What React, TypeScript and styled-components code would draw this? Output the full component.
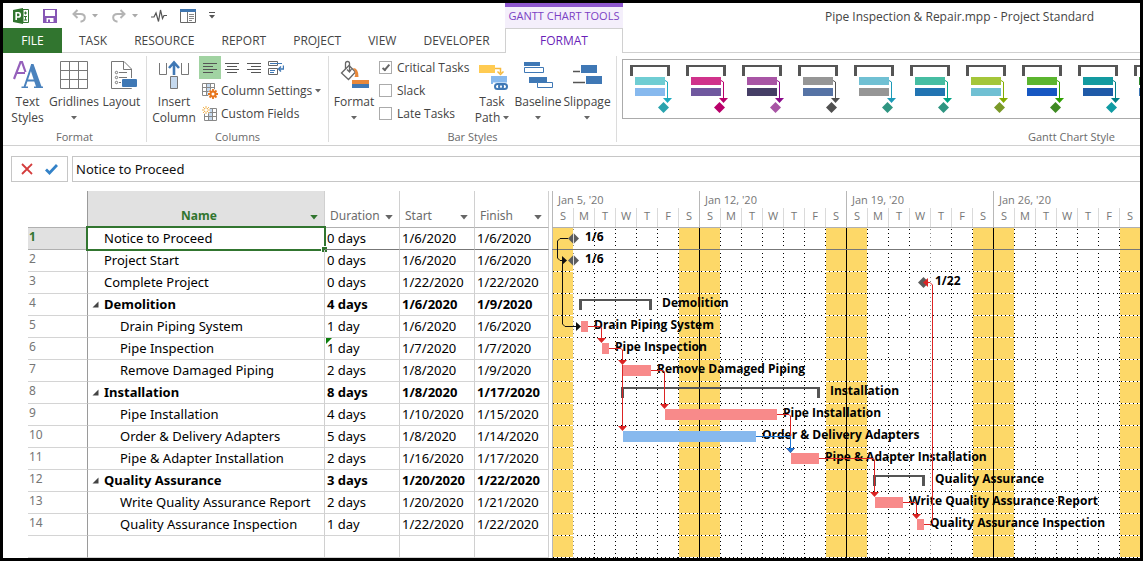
import React, { useEffect, useRef, useState } from "react";
import styled, { createGlobalStyle } from "styled-components";

const GREEN = "#31752f";
const PURPLE = "#7b3fc4";
const DAY = 21;
const WEEK = DAY * 7;
const ROW = 22;

const GlobalStyle = createGlobalStyle`
  *, *::before, *::after { box-sizing: border-box; }
  body { margin: 0; background: #000; }
  button, input { font: inherit; color: inherit; margin: 0; padding: 0; }
  button { background: none; border: 0; }
  svg { display: block; flex: none; }
`;

const Frame = styled.div`
  min-height: 100vh;
  border: 3px solid #000;
  background: #fff;
  color: #444;
  font-family: "Open Sans", "Noto Sans", sans-serif;
  font-size: 12px;
  line-height: 16px;
  overflow: hidden;
`;

/* ---------- title bar and tabs ---------- */
const Top = styled.header`
  display: flex;
`;
const TopLeft = styled.div`
  flex: none;
  width: 502px;
`;
const QuickBar = styled.div`
  display: flex;
  align-items: center;
  height: 25px;
  padding-left: 10px;
`;
const QuickButton = styled.button<{ $gap?: number }>`
  display: flex;
  align-items: center;
  margin-right: ${(p) => p.$gap ?? 0}px;
`;
const Tabs = styled.nav`
  display: flex;
  height: 25px;
  border-bottom: 1px solid #d0d0d0;
`;
const FileTab = styled.button`
  width: 59px;
  height: 25px;
  margin-right: 4px;
  background: ${GREEN};
  color: #fff;
`;
const Tab = styled.button`
  padding: 2px 14px 0 13px;
  white-space: nowrap;
`;
const Context = styled.div`
  flex: none;
  width: 118px;
`;
const ContextTitle = styled.div`
  height: 25px;
  border-top: 4px solid #8e57cf;
  background: #f4effb;
  color: ${PURPLE};
  font-size: 11px;
  line-height: 18px;
  text-align: center;
  white-space: nowrap;
`;
const ContextTab = styled.button`
  display: block;
  width: 100%;
  height: 25px;
  border: solid #d0d0d0;
  border-width: 1px 1px 0;
  color: #6a1fb8;
`;
const TopRight = styled.div`
  flex: 1;
  min-width: 0;
  border-bottom: 1px solid #d0d0d0;
`;
const DocTitle = styled.h1`
  margin: 0;
  padding: 6px 46px 0 0;
  font-size: 12px;
  font-weight: 400;
  line-height: 16px;
  text-align: right;
  white-space: nowrap;
`;

/* ---------- ribbon ---------- */
const Ribbon = styled.section`
  display: flex;
  height: 93px;
  padding-top: 3px;
  border-bottom: 1px solid #d0d0d0;
`;
const Group = styled.div<{ $width?: number }>`
  display: flex;
  flex-direction: column;
  flex: ${(p) => (p.$width ? "none" : "1")};
  width: ${(p) => (p.$width ? `${p.$width}px` : "auto")};
  min-width: 0;
  height: 86px;
  border-right: ${(p) => (p.$width ? "1px solid #dcdcdc" : "0")};
`;
const GroupBody = styled.div<{ $pad?: number }>`
  display: flex;
  flex: 1;
  padding-left: ${(p) => p.$pad ?? 0}px;
`;
const GroupLabel = styled.div<{ $end?: boolean }>`
  height: 16px;
  margin-bottom: -3px;
  padding-right: ${(p) => (p.$end ? 25 : 0)}px;
  color: #6a6a6a;
  font-size: 11px;
  text-align: ${(p) => (p.$end ? "right" : "center")};
`;
const Big = styled.button<{ $width: number }>`
  display: flex;
  flex: none;
  flex-direction: column;
  align-items: center;
  width: ${(p) => p.$width}px;
  padding-top: 4px;
  white-space: nowrap;
  > svg:first-child { margin-bottom: 4px; }
`;
const BigText = styled.span`
  display: flex;
  align-items: center;
  justify-content: center;
  gap: 3px;
  height: 16px;
`;
const Stack = styled.div<{ $width?: number }>`
  display: flex;
  flex: none;
  flex-direction: column;
  width: ${(p) => (p.$width ? `${p.$width}px` : "auto")};
`;
const AlignRow = styled.div`
  display: flex;
  height: 23px;
`;
const AlignButton = styled.button<{ $on?: boolean }>`
  display: grid;
  place-items: center;
  width: 22px;
  height: 23px;
  background: ${(p) => (p.$on ? "#a1d3a2" : "transparent")};
`;
const Small = styled.button`
  display: flex;
  align-items: center;
  gap: 3px;
  height: 23px;
  padding-left: 3px;
  white-space: nowrap;
`;
const Check = styled.label`
  display: flex;
  align-items: center;
  gap: 5px;
  height: 23px;
  white-space: nowrap;
`;
const Box = styled.input`
  appearance: none;
  display: grid;
  place-items: center;
  flex: none;
  width: 13px;
  height: 13px;
  border: 1px solid #ababab;
  background: #fff;
  &:checked::after {
    content: "";
    width: 4px;
    height: 8px;
    margin-top: -2px;
    border: solid #666;
    border-width: 0 2px 2px 0;
    transform: rotate(40deg);
  }
`;
const Gallery = styled.div`
  display: flex;
  flex: 1;
  min-width: 0;
  height: 60px;
  margin: 3px 0 0 5px;
  border: 1px solid #ababab;
  border-right: 0;
  overflow: hidden;
`;

/* ---------- entry bar ---------- */
const EntryBar = styled.div`
  display: flex;
  gap: 4px;
  margin: 10px 0 9px;
  padding-left: 8px;
`;
const EntryButtons = styled.div`
  display: flex;
  align-items: center;
  justify-content: center;
  gap: 12px;
  width: 57px;
  height: 26px;
  border: 1px solid #c6c6c6;
`;
const EntryInput = styled.input`
  flex: 1;
  min-width: 0;
  height: 26px;
  padding-left: 3px;
  border: 1px solid #c6c6c6;
  border-right: 0;
  color: #111;
  font-family: "Noto Sans", "Open Sans", sans-serif;
  font-size: 13px;
`;

/* ---------- sheet ---------- */
const Split = styled.main`
  display: flex;
`;
const SheetPane = styled.div`
  flex: none;
  width: 546px;
  padding-left: 25px;
`;
const Sheet = styled.table`
  table-layout: fixed;
  width: 521px;
  border-collapse: separate;
  border-spacing: 0;
  color: #000;
  font-family: "Noto Sans", "Open Sans", sans-serif;
  font-size: 13px;
  line-height: 18px;
`;
const Head = styled.th<{ $on?: boolean; $blank?: boolean }>`
  height: 37px;
  padding: 13px 6px 0 ${(p) => (p.$on ? 0 : 5)}px;
  border-right: 1px solid ${(p) => (p.$blank ? "#9a9a9a" : "#d0d0d0")};
  border-bottom: 1px solid #b0b0b0;
  background: ${(p) => (p.$on ? "#e1e1e1" : "#fff")};
  color: ${(p) => (p.$on ? GREEN : "#6c6c6c")};
  font-size: 12px;
  font-weight: ${(p) => (p.$on ? 700 : 400)};
`;
const HeadInner = styled.div<{ $center?: boolean }>`
  display: flex;
  align-items: center;
  justify-content: space-between;
  > span { flex: 1; text-align: ${(p) => (p.$center ? "center" : "left")}; }
  > button { padding-top: 3px; }
`;
const RowNumber = styled.th<{ $on?: boolean }>`
  height: 22px;
  padding: 0 0 3px 1px;
  border-right: 1px solid #9a9a9a;
  border-bottom: 1px solid ${(p) => (p.$on ? "#b0b0b0" : "#d4d4d4")};
  background: ${(p) => (p.$on ? "#e1e1e1" : "#fff")};
  color: ${(p) => (p.$on ? GREEN : "#767676")};
  font-size: 12px;
  font-weight: ${(p) => (p.$on ? 700 : 400)};
  line-height: 18px;
  text-align: left;
`;
const Cell = styled.td<{ $bold?: boolean; $line?: boolean }>`
  position: relative;
  height: 22px;
  padding: 0 0 1px 2px;
  border-right: 1px solid #d0d0d0;
  border-bottom: 1px solid ${(p) => (p.$line ? "#777" : "#d4d4d4")};
  font-weight: ${(p) => (p.$bold ? 700 : 400)};
  white-space: nowrap;
`;
const NameCell = styled(Cell)<{ $level: number }>`
  padding-left: ${(p) => p.$level * 16}px;
`;
const Selection = styled.div`
  position: absolute;
  inset: -2px;
  border: 2px solid ${GREEN};
  pointer-events: none;
  &::after {
    content: "";
    position: absolute;
    right: -3px;
    bottom: -3px;
    width: 6px;
    height: 6px;
    border: solid #fff;
    border-width: 1px 0 0 1px;
    background: ${GREEN};
  }
`;
const Toggle = styled.button`
  position: absolute;
  left: 4px;
  top: 7px;
`;
const Flag = styled.span`
  position: absolute;
  left: 1px;
  top: 0;
  border: 3px solid transparent;
  border-top-color: #0b7d0b;
  border-left-color: #0b7d0b;
`;

/* ---------- chart ---------- */
const ChartPane = styled.div`
  flex: 1;
  min-width: 0;
  margin-left: 3px;
  overflow: hidden;
`;
const Timescale = styled.div`
  display: flex;
  height: 37px;
  border-bottom: 1px solid #b0b0b0;
  color: #767676;
`;
const Week = styled.div`
  flex: none;
  width: ${WEEK}px;
  border-left: 1px solid #b8b8b8;
`;
const WeekName = styled.div`
  height: 17px;
  padding-left: 5px;
  font-size: 11px;
  line-height: 18px;
`;
const Days = styled.div`
  display: flex;
  margin-left: -1px;
`;
const DayName = styled.span<{ $first: boolean }>`
  width: ${DAY}px;
  height: 19px;
  border-left: 1px solid ${(p) => (p.$first ? "transparent" : "#dadada")};
  font-size: 11px;
  line-height: 16px;
  text-align: center;
`;

type Task = {
  name: string;
  duration: string;
  start: string;
  finish: string;
  summary?: boolean;
  level: number;
  flag?: boolean;
  bar: [number, number];
  kind: "milestone" | "summary" | "critical" | "normal";
  label?: string;
};

const tasks: Task[] = [
  { name: "Notice to Proceed", duration: "0 days", start: "1/6/2020", finish: "1/6/2020", level: 1, bar: [21, 21], kind: "milestone", label: "1/6" },
  { name: "Project Start", duration: "0 days", start: "1/6/2020", finish: "1/6/2020", level: 1, bar: [21, 21], kind: "milestone", label: "1/6" },
  { name: "Complete Project", duration: "0 days", start: "1/22/2020", finish: "1/22/2020", level: 1, bar: [371, 371], kind: "milestone", label: "1/22" },
  { name: "Demolition", duration: "4 days", start: "1/6/2020", finish: "1/9/2020", level: 1, summary: true, bar: [27, 100], kind: "summary" },
  { name: "Drain Piping System", duration: "1 day", start: "1/6/2020", finish: "1/6/2020", level: 2, bar: [29, 36], kind: "critical" },
  { name: "Pipe Inspection", duration: "1 day", start: "1/7/2020", finish: "1/7/2020", level: 2, flag: true, bar: [50, 57], kind: "critical" },
  { name: "Remove Damaged Piping", duration: "2 days", start: "1/8/2020", finish: "1/9/2020", level: 2, bar: [71, 99], kind: "critical" },
  { name: "Installation", duration: "8 days", start: "1/8/2020", finish: "1/17/2020", level: 1, summary: true, bar: [69, 268], kind: "summary" },
  { name: "Pipe Installation", duration: "4 days", start: "1/10/2020", finish: "1/15/2020", level: 2, bar: [113, 225], kind: "critical" },
  { name: "Order & Delivery Adapters", duration: "5 days", start: "1/8/2020", finish: "1/14/2020", level: 2, bar: [71, 204], kind: "normal" },
  { name: "Pipe & Adapter Installation", duration: "2 days", start: "1/16/2020", finish: "1/17/2020", level: 2, bar: [239, 267], kind: "critical" },
  { name: "Quality Assurance", duration: "3 days", start: "1/20/2020", finish: "1/22/2020", level: 1, summary: true, bar: [321, 373], kind: "summary" },
  { name: "Write Quality Assurance Report", duration: "2 days", start: "1/20/2020", finish: "1/21/2020", level: 2, bar: [323, 351], kind: "critical" },
  { name: "Quality Assurance Inspection", duration: "1 day", start: "1/22/2020", finish: "1/22/2020", level: 2, bar: [365, 372], kind: "critical" },
];

const monthNames = ["Jan", "Feb", "Mar", "Apr", "May", "Jun", "Jul", "Aug", "Sep", "Oct", "Nov", "Dec"];
const weekName = (i: number) => {
  const d = new Date(2020, 0, 5 + i * 7);
  return `${monthNames[d.getMonth()]} ${d.getDate()}, '${String(d.getFullYear()).slice(2)}`;
};

/* ---------- small drawings ---------- */
const Caret = ({ color = "#666", size = 6 }: { color?: string; size?: number }) => (
  <svg width={size} height={size / 2 + 1} viewBox="0 0 6 4">
    <path d="M0 0H6L3 3.5Z" fill={color} />
  </svg>
);

const ProjectLogo = () => (
  <svg width="16" height="16" viewBox="0 0 16 16">
    <path d="M10 1.500H15.500V14.500H10Z" fill="#fff" stroke={GREEN} />
    <path d="M11 5H14M12.500 3.500V6.500M11 8.500H14M12.500 8V12M11 12H14" stroke={GREEN} />
    <path d="M0 2 10 0V16L0 14Z" fill={GREEN} />
    <path d="M3.200 12V4.800H5.200Q7.300 4.800 7.300 6.900T5.200 9H3.500" fill="none" stroke="#fff" strokeWidth="1.600" />
  </svg>
);
const SaveIcon = () => (
  <svg width="14" height="14" viewBox="0 0 14 14">
    <path d="M0 0H14V14H0Z" fill="#8757b5" />
    <path d="M2 1H12V7H2Z" fill="#fff" />
    <path d="M3.500 9H10.500V13H3.500Z" fill="#fff" />
    <path d="M5 10.500H7V13H5Z" fill="#8757b5" />
  </svg>
);
const UndoIcon = ({ flip }: { flip?: boolean }) => (
  <svg width="14" height="14" viewBox="0 0 14 14">
    <g transform={flip ? "translate(14 0) scale(-1 1)" : undefined} fill="none" stroke="#b4b4b4" strokeWidth="2">
      <path d="M5.500 1 1.500 5 5.500 9" />
      <path d="M2 5H8.500Q12.800 5 12.800 8.500T8.500 12.800" />
    </g>
  </svg>
);
const PulseIcon = () => (
  <svg width="16" height="14" viewBox="0 0 16 14" fill="none" stroke="#555" strokeWidth="1.200">
    <path d="M0 8H3L5 4 7.500 12.500 9.500 1 11.500 9.500 13 6.500H16" />
  </svg>
);
const WindowIcon = () => (
  <svg width="16" height="14" viewBox="0 0 16 14">
    <path d="M.5 .5H15.500V13.500H.5Z" fill="#fff" stroke="#666" />
    <path d="M0 0H16V3H0Z" fill="#3f76b0" />
    <path d="M7.500 3V13" stroke="#777" />
    <path d="M9 5.500H14M9 7.500H14M9 9.500H14M9 11.500H12" stroke="#888" />
  </svg>
);
const TextStylesIcon = () => (
  <svg width="30" height="30" viewBox="0 0 30 30">
    <path d="M1 19 7.500 2H9L12.500 12M3.500 13H12" fill="none" stroke="#9560bb" strokeWidth="2.200" />
    <path d="M18 4H20.500L29 28H23.500L17.500 10Z" fill="#4a82bd" />
    <path d="M19 5 11.500 27M14 20.500H23" fill="none" stroke="#4a82bd" strokeWidth="2" />
    <path d="M8.500 27.300H15M21 27.300H30" stroke="#4a82bd" strokeWidth="1.500" />
  </svg>
);
const GridIcon = () => (
  <svg width="30" height="30" viewBox="0 0 30 30" fill="none" stroke="#777">
    <path d="M1.500 1.500H28.500V28.500H1.500ZM10.500 1.500V28.500M19.500 1.500V28.500M1.500 10.500H28.500M1.500 19.500H28.500" />
  </svg>
);
const LayoutIcon = () => (
  <svg width="30" height="30" viewBox="0 0 30 30">
    <path d="M4.500 28.500V1.500H17L24.500 9V28.500Z" fill="#fff" stroke="#777" />
    <path d="M16.500 1.500V9.500H24.500" fill="none" stroke="#777" />
    <path d="M12 12.500H20M12 17.500H20M12 22.500H16" stroke="#777" />
    <g fill="#fff" stroke="#777"><circle cx="9.500" cy="12.500" r="1.200" /><circle cx="9.500" cy="17.500" r="1.200" /><circle cx="9.500" cy="22.500" r="1.200" /></g>
    <path d="M15 18H30V28H14V19Z" fill="#fff" />
    <rect x="15" y="19" width="15" height="8" rx="1" fill="#3f78b5" />
  </svg>
);
const InsertColumnIcon = () => (
  <svg width="32" height="30" viewBox="0 0 32 30">
    <path d="M1.500 3V14.500H8.500V3M23.500 3V14.500H30.500V3" fill="none" stroke="#777" />
    <path d="M16 15V3M11 8 16 2.500 21 8" fill="none" stroke="#3f78b5" strokeWidth="2.600" />
    <path d="M12.500 16.500H19.500V28.500H12.500Z" fill="#c5d9ee" stroke="#777" />
  </svg>
);
const AlignIcon = ({ kind }: { kind: "left" | "center" | "right" }) => {
  const x = kind === "left" ? 0 : kind === "center" ? 2 : 4;
  return (
    <svg width="14" height="12" viewBox="0 0 14 12" stroke="#555">
      <path d={`M0 1.500H14M${x} 4.500h10M0 7.500H14M${x} 10.500h10`} />
    </svg>
  );
};
const WrapIcon = () => (
  <svg width="16" height="16" viewBox="0 0 16 16" fill="none">
    <path d="M.5 1.500H9.500V5.500H.5ZM.5 8.500H9.500V14.500H.5Z" stroke="#666" />
    <path d="M2 3.500H14M2 10.500H7M2 12.500H6" stroke="#3f78b5" />
    <path d="M15.500 5.500V9H10.500M13 6.500 10.500 9 13 11.500" stroke="#3f78b5" strokeWidth="1.400" />
  </svg>
);
const ColumnSettingsIcon = () => (
  <svg width="16" height="16" viewBox="0 0 16 16">
    <path d="M.5 .5H12.500V12.500H.5Z" fill="#fff" stroke="#888" />
    <path d="M5 1H8V12H5Z" fill="#c5d9ee" />
    <path d="M4.500 1V12M8.500 1V12M1 4.500H12M1 8.500H12" stroke="#888" />
    <circle cx="11" cy="11" r="5" fill="#fff" />
    <path d="M11 6V16M6 11H16M7.500 7.500 14.500 14.500M14.500 7.500 7.500 14.500" stroke="#e8771f" strokeWidth="1.800" />
    <circle cx="11" cy="11" r="2.500" fill="#fff" stroke="#e8771f" strokeWidth="2" />
  </svg>
);
const CustomFieldsIcon = () => (
  <svg width="16" height="16" viewBox="0 0 16 16">
    <path d="M2.500 2.500H14.500V14.500H2.500Z" fill="#fff" stroke="#888" />
    <path d="M7 3H10V14H7Z" fill="#c5d9ee" />
    <path d="M6.500 3V14M10.500 3V14M3 6.500H14M3 10.500H14" stroke="#888" />
    <circle cx="4" cy="4" r="4" fill="#fff" />
    <path d="M4 0V8M0 4H8M1 1 7 7M7 1 1 7" stroke="#f0b455" />
    <circle cx="4" cy="4" r="1.500" fill="#fff" />
  </svg>
);
const FormatIcon = () => (
  <svg width="30" height="30" viewBox="0 0 30 30">
    <path d="M2.500 13 10 5.500 16.500 12 9.500 19.500Z" fill="#fff" stroke="#666" strokeWidth="1.300" />
    <path d="M6.500 9V3.500Q6.500 1.500 8.500 1.500T10.500 3.500V11M8 9.500 10.500 12 12.500 9" fill="none" stroke="#666" strokeWidth="1.300" />
    <path d="M14 8Q19.500 8 19.500 17H15.500Q17.500 12 14 8Z" fill="#e8883a" />
    <path d="M13 20H30V24H13Z" fill="#e8883a" />
    <path d="M13 24H30V28H13Z" fill="#3f78b5" />
  </svg>
);
const TaskPathIcon = () => (
  <svg width="32" height="30" viewBox="0 0 32 30">
    <path d="M3 5H19V13H3Z" fill="#ffcb52" />
    <path d="M19 8.500H24.500V13M21.500 11.500 24.500 14.500 27.500 11.500" fill="none" stroke="#f5b93c" strokeWidth="1.500" />
    <path d="M15 16H31V24H15Z" fill="#87b9ee" />
    <path d="M17 22.500H32V30H17Z" fill="#fff" />
    <g fill="none" stroke="#3f78b5" strokeWidth="2"><rect x="19" y="24" width="8" height="5" rx="2.500" /><rect x="23" y="24" width="8" height="5" rx="2.500" /></g>
  </svg>
);
const BaselineIcon = () => (
  <svg width="30" height="30" viewBox="0 0 30 30">
    <path d="M1 2H17V6H1ZM6 17H24V23H6Z" fill="#3f78b5" />
    <path d="M1.500 7.500H20.500V12.500H1.500ZM14.500 22.500H29.500V27.500H14.500Z" fill="#fff" stroke="#3f78b5" />
  </svg>
);
const SlippageIcon = () => (
  <svg width="30" height="30" viewBox="0 0 30 30">
    <path d="M9 5H25V13H9ZM14 16H30V24H14Z" fill="#3f78b5" />
    <path d="M1 11.500H8M1 22.500H13" stroke="#555" strokeWidth="1.600" />
  </svg>
);

const galleryColors = [
  ["#6fcdd3", "#87b9ee", "#1cabc0", "#2aa3ae"],
  ["#d0328b", "#70589f", "#b9006a", "#b9006a"],
  ["#a855a5", "#453e66", "#8a0a8a", "#a855a5"],
  ["#969696", "#5673a5", "#505050", "#505050"],
  ["#70c0d3", "#969696", "#1c9ab8", "#2f9581"],
  ["#46bda2", "#2174b2", "#00a383", "#2f9581"],
  ["#a4c639", "#70c0d3", "#84ac00", "#7a9929"],
  ["#5bb52f", "#1757c2", "#2fa000", "#3f8a22"],
  ["#139aa0", "#1f5aa8", "#007f86", "#109ba3"],
  ["#2f8a2f", "#3f78b5", "#2f8a2f", "#2f8a2f"],
];
const StyleSwatch = ({ colors }: { colors: string[] }) => (
  <svg width="56" height="58" viewBox="0 0 56 58">
    <path d="M7 5H47V16H44V7H10V16H7Z" fill="#555" />
    <path d="M12 17H42V25H12Z" fill={colors[0]} />
    <path d="M12 28H42V36H12Z" fill={colors[1]} />
    <path d="M42 20.500 44.500 22V39" fill="none" stroke={colors[2]} />
    <path d="M40 38H49L44.500 43Z" fill={colors[2]} />
    <path d="M40.500 42 46 47.500 40.500 53 35 47.500Z" fill={colors[3]} />
  </svg>
);

/* ---------- chart drawing ---------- */
const RED = "#dc2424";
const BLUE = "#1f74d0";

const arrows = {
  down: (x: number, y: number) => `M${x - 4.5} ${y - 5}h9l-4.500 5Z`,
  right: (x: number, y: number) => `M${x - 5} ${y - 4.5}v9l5 -4.500Z`,
  left: (x: number, y: number) => `M${x + 5} ${y - 4.5}v9l-5 -4.500Z`,
};

const links: { d: string; color: string; dir: keyof typeof arrows; tip: [number, number] }[] = [
  { d: "M16 10.500H8L5.500 13V30L8 32.500H12", color: "#111", dir: "right", tip: [15, 32.5] },
  { d: "M10.500 32V96L13 98.500H25", color: "#111", dir: "right", tip: [29, 98.5] },
  { d: "M36 98.500H48L49.500 100V112", color: RED, dir: "down", tip: [49.5, 115] },
  { d: "M57 120.500H69L70.500 122V134", color: RED, dir: "down", tip: [70.5, 137] },
  { d: "M70.500 137V200", color: RED, dir: "down", tip: [70.5, 203] },
  { d: "M99 142.500H111L112.500 144V178", color: RED, dir: "down", tip: [112.5, 181] },
  { d: "M225 186.500H237L238.500 188V208", color: RED, dir: "down", tip: [238.5, 225] },
  { d: "M204 208.500H238.500V222", color: BLUE, dir: "down", tip: [238.5, 225] },
  { d: "M267 230.500H321L322.500 232V266", color: RED, dir: "down", tip: [322.5, 269] },
  { d: "M351 274.500H363L364.500 276V288", color: RED, dir: "down", tip: [364.5, 291] },
  { d: "M372 296.500H379L380.500 295V57L378 54.500H374", color: RED, dir: "left", tip: [371, 54.5] },
];

const ChartLabels = styled.g`
  font-family: "Open Sans", "Noto Sans", sans-serif;
  font-size: 12px;
  font-weight: 700;
  fill: #000;
`;

const Bar = ({ task, y }: { task: Task; y: number }) => {
  const [a, b] = task.bar;
  if (task.kind === "milestone") return <path d={`M${a + 0.5} ${y + 5}l5.500 5.500-5.500 5.500-5.500-5.500Z`} fill="#5c5c5c" />;
  if (task.kind === "summary") return <path d={`M${a} ${y + 5}H${b}v11h-3v-9H${a + 3}v9H${a}Z`} fill="#555" />;
  return <path d={`M${a} ${y + 5}H${b}v11H${a}Z`} fill={task.kind === "critical" ? "#f88a8a" : "#87b9ee"} />;
};

const labelGap = { milestone: 12, summary: 10, critical: 6, normal: 6 };

const Chart = ({ weeks }: { weeks: number }) => {
  const width = weeks * WEEK;
  const height = (tasks.length + 1) * ROW;
  const days = Array.from({ length: weeks * 7 }, (_, i) => i);
  return (
    <svg width={width} height={height} role="img" aria-label="Gantt chart">
      {days.map((d) => (d % 7 === 0 || d % 7 === 6) && <rect key={d} x={d * DAY + 1} width={DAY - 1} height={height} fill="#fdd868" />)}
      {tasks.map((_, i) => (i + 2) * ROW - 0.5).map((y) => (
        <g key={y}>
          <path d={`M0 ${y}H${width}`} stroke="#fff" />
          <path d={`M1 ${y}H${width}`} stroke="#000" strokeDasharray="1 3" />
        </g>
      ))}
      {days.map((d) => {
        const x = d * DAY + 0.5;
        if (d % 7 === 0) return <path key={d} d={`M${x} 0V${height}`} stroke={d ? "#000" : "#b8b8b8"} />;
        return (
          <g key={d}>
            <path d={`M${x} 0V${height}`} stroke="#fff" />
            <path d={`M${x} 1V${height}`} stroke={d === 1 || d === 18 ? "#888" : "#000"} strokeDasharray="1 3" />
          </g>
        );
      })}
      <path d={`M0 21.500H${width}`} stroke="#777" />
      {tasks.map((t, i) => <Bar key={i} task={t} y={i * ROW} />)}
      <path d="M21.500 5V16M21.500 27V38" stroke="#ddd" />
      <ChartLabels>
        {tasks.map((t, i) => (
          <text key={i} x={t.bar[1] + labelGap[t.kind]} y={i * ROW + 13}>{t.label ?? t.name}</text>
        ))}
      </ChartLabels>
      {links.map((l) => (
        <g key={l.d}>
          <path d={l.d} fill="none" stroke={l.color} />
          <path d={arrows[l.dir](...l.tip)} fill={l.color} />
        </g>
      ))}
    </svg>
  );
};

/* The timescale grows by whole weeks until it covers the pane. */
const GanttPane = () => {
  const ref = useRef<HTMLDivElement>(null);
  const [weeks, setWeeks] = useState(4);
  useEffect(() => {
    const el = ref.current;
    if (!el) return;
    const observer = new ResizeObserver(() => setWeeks(Math.max(4, Math.ceil(el.clientWidth / WEEK))));
    observer.observe(el);
    return () => observer.disconnect();
  }, []);
  return (
    <ChartPane ref={ref}>
      <Timescale>
        {Array.from({ length: weeks }, (_, w) => (
          <Week key={w}>
            <WeekName>{weekName(w)}</WeekName>
            <Days>{"SMTWTFS".split("").map((d, i) => <DayName key={i} $first={i === 0}>{d}</DayName>)}</Days>
          </Week>
        ))}
      </Timescale>
      <Chart weeks={weeks} />
    </ChartPane>
  );
};

const columns = ["Duration", "Start", "Finish"];

export default function App() {
  return (
    <Frame>
      <GlobalStyle />
      <Top>
        <TopLeft>
          <QuickBar>
            <QuickButton $gap={14} aria-label="Project"><ProjectLogo /></QuickButton>
            <QuickButton $gap={15} aria-label="Save"><SaveIcon /></QuickButton>
            <QuickButton $gap={6} aria-label="Undo"><UndoIcon /></QuickButton>
            <QuickButton $gap={14} aria-label="Undo list"><Caret color="#aaa" /></QuickButton>
            <QuickButton $gap={6} aria-label="Redo"><UndoIcon flip /></QuickButton>
            <QuickButton $gap={13} aria-label="Redo list"><Caret color="#aaa" /></QuickButton>
            <QuickButton $gap={13} aria-label="Task inspector"><PulseIcon /></QuickButton>
            <QuickButton $gap={13} aria-label="Details view"><WindowIcon /></QuickButton>
            <QuickButton aria-label="Customize toolbar">
              <svg width="6" height="7" viewBox="0 0 6 7"><path d="M0 .5H6" stroke="#555" /><path d="M0 3H6L3 6.500Z" fill="#555" /></svg>
            </QuickButton>
          </QuickBar>
          <Tabs>
            <FileTab>FILE</FileTab>
            {["TASK", "RESOURCE", "REPORT", "PROJECT", "VIEW", "DEVELOPER"].map((t) => <Tab key={t}>{t}</Tab>)}
          </Tabs>
        </TopLeft>
        <Context>
          <ContextTitle>GANTT CHART TOOLS</ContextTitle>
          <ContextTab>FORMAT</ContextTab>
        </Context>
        <TopRight>
          <DocTitle>Pipe Inspection &amp; Repair.mpp - Project Standard</DocTitle>
        </TopRight>
      </Top>

      <Ribbon>
        <Group $width={144}>
          <GroupBody>
            <Big $width={49}><TextStylesIcon /><BigText>Text</BigText><BigText>Styles</BigText></Big>
            <Big $width={44}><GridIcon /><BigText>Gridlines</BigText><BigText><Caret /></BigText></Big>
            <Big $width={51}><LayoutIcon /><BigText>Layout</BigText></Big>
          </GroupBody>
          <GroupLabel>Format</GroupLabel>
        </Group>
        <Group $width={182}>
          <GroupBody $pad={2}>
            <Big $width={50}><InsertColumnIcon /><BigText>Insert</BigText><BigText>Column</BigText></Big>
            <Stack>
              <AlignRow>
                <AlignButton $on aria-label="Align left"><AlignIcon kind="left" /></AlignButton>
                <AlignButton aria-label="Center"><AlignIcon kind="center" /></AlignButton>
                <AlignButton aria-label="Align right"><AlignIcon kind="right" /></AlignButton>
                <AlignButton aria-label="Wrap text"><WrapIcon /></AlignButton>
              </AlignRow>
              <Small><ColumnSettingsIcon />Column Settings<Caret /></Small>
              <Small><CustomFieldsIcon />Custom Fields</Small>
            </Stack>
          </GroupBody>
          <GroupLabel>Columns</GroupLabel>
        </Group>
        <Group $width={288}>
          <GroupBody>
            <Big $width={50}><FormatIcon /><BigText>Format</BigText><BigText><Caret /></BigText></Big>
            <Stack $width={88}>
              <Check><Box type="checkbox" defaultChecked />Critical Tasks</Check>
              <Check><Box type="checkbox" />Slack</Check>
              <Check><Box type="checkbox" />Late Tasks</Check>
            </Stack>
            <Big $width={50}><TaskPathIcon /><BigText>Task</BigText><BigText>Path<Caret /></BigText></Big>
            <Big $width={42}><BaselineIcon /><BigText>Baseline</BigText><BigText><Caret /></BigText></Big>
            <Big $width={56}><SlippageIcon /><BigText>Slippage</BigText><BigText><Caret /></BigText></Big>
          </GroupBody>
          <GroupLabel>Bar Styles</GroupLabel>
        </Group>
        <Group>
          <GroupBody>
            <Gallery>{galleryColors.map((c, i) => <StyleSwatch key={i} colors={c} />)}</Gallery>
          </GroupBody>
          <GroupLabel $end>Gantt Chart Style</GroupLabel>
        </Group>
      </Ribbon>

      <EntryBar>
        <EntryButtons>
          <button aria-label="Cancel">
            <svg width="12" height="12" viewBox="0 0 12 12"><path d="M1 1 11 11M11 1 1 11" stroke="#d43c3c" strokeWidth="1.800" /></svg>
          </button>
          <button aria-label="Enter">
            <svg width="13" height="12" viewBox="0 0 13 12"><path d="M1 6.500 4.500 10 12 2" fill="none" stroke="#3382c8" strokeWidth="2.800" /></svg>
          </button>
        </EntryButtons>
        <EntryInput aria-label="Entry" defaultValue="Notice to Proceed" />
      </EntryBar>

      <Split>
        <SheetPane>
          <Sheet>
            <colgroup>
              <col width="60" /><col width="237" /><col width="75" /><col width="75" /><col width="74" />
            </colgroup>
            <thead>
              <tr>
                <Head $blank aria-label="Row" />
                <Head $on><HeadInner $center><span>Name</span><button aria-label="Name menu"><Caret color={GREEN} size={8} /></button></HeadInner></Head>
                {columns.map((c) => (
                  <Head key={c}><HeadInner><span>{c}</span><button aria-label={`${c} menu`}><Caret size={8} /></button></HeadInner></Head>
                ))}
              </tr>
            </thead>
            <tbody>
              {tasks.map((t, i) => (
                <tr key={i}>
                  <RowNumber $on={i === 0}>{i + 1}</RowNumber>
                  <NameCell $level={t.level} $bold={t.summary}>
                    {t.summary && (
                      <Toggle aria-label="Collapse"><svg width="7" height="7" viewBox="0 0 7 7"><path d="M6.500 .5V6.500H.5Z" fill="#444" /></svg></Toggle>
                    )}
                    {t.name}
                    {i === 0 && <Selection />}
                  </NameCell>
                  <Cell $bold={t.summary} $line={i === 0}>{t.flag && <Flag />}{t.duration}</Cell>
                  <Cell $bold={t.summary} $line={i === 0}>{t.start}</Cell>
                  <Cell $bold={t.summary} $line={i === 0}>{t.finish}</Cell>
                </tr>
              ))}
              <tr><RowNumber /><Cell /><Cell /><Cell /><Cell /></tr>
            </tbody>
          </Sheet>
        </SheetPane>
        <GanttPane />
      </Split>
    </Frame>
  );
}
